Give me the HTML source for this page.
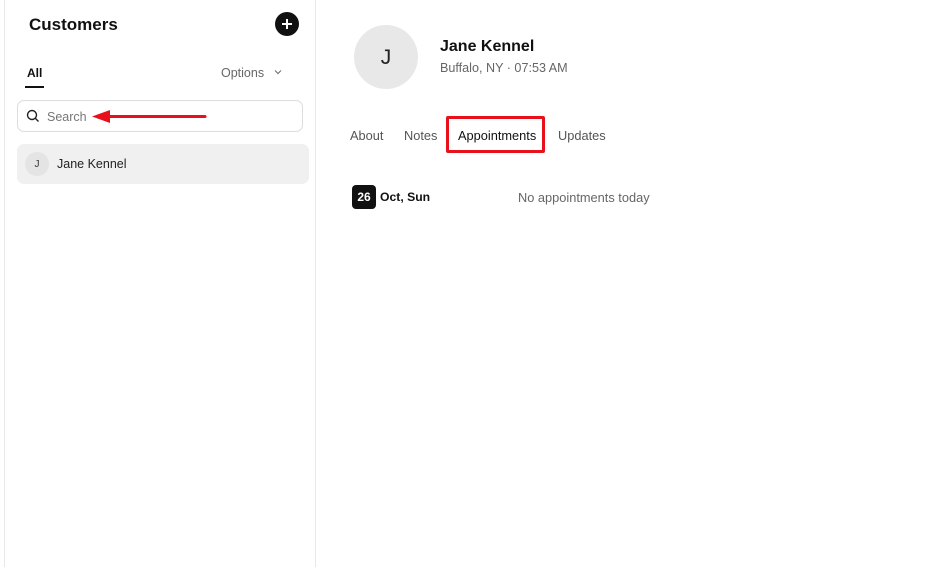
<!DOCTYPE html>
<html><head><meta charset="utf-8"><style>
*{margin:0;padding:0;box-sizing:border-box}
body{width:946px;height:567px;background:#fff;font-family:"Liberation Sans",sans-serif;position:relative;overflow:hidden;color:#111}
.a{position:absolute;white-space:nowrap}
</style></head><body>
<div class="a" style="left:4px;top:0;width:312px;height:567px;border-left:1px solid #e8e8e8;border-right:1px solid #e8e8e8"></div>
<div class="a" style="left:29px;top:15px;font-size:17px;font-weight:bold">Customers</div>
<svg class="a" style="left:275px;top:12px" width="24" height="24"><circle cx="12" cy="12" r="12" fill="#111"/><path d="M12 7V17M7 12H17" stroke="#fff" stroke-width="2"/></svg>
<div class="a" style="left:27px;top:66px;font-size:12px;font-weight:bold">All</div>
<div class="a" style="left:25px;top:86px;width:19px;height:2px;background:#111"></div>
<div class="a" style="left:221px;top:66px;font-size:12.5px;color:#666">Options</div>
<svg class="a" style="left:274px;top:69px" width="8" height="6"><path d="M1 1.5L4 4.5L7 1.5" stroke="#777" fill="none" stroke-width="1.2"/></svg>
<div class="a" style="left:17px;top:100px;width:286px;height:32px;border:1px solid #ddd;border-radius:7px"></div>
<svg class="a" style="left:26px;top:109px" width="14" height="14"><circle cx="6" cy="6" r="4.5" stroke="#222" stroke-width="1.4" fill="none"/><path d="M9.3 9.3L12.5 12.5" stroke="#222" stroke-width="1.4"/></svg>
<div class="a" style="left:47px;top:110px;font-size:12.5px;color:#777">Search</div>
<svg class="a" style="left:90px;top:107px" width="118" height="20"><path d="M14 9.5H115" stroke="#e8101a" stroke-width="3" stroke-linecap="round"/><path d="M2 9.5L20 3V16Z" fill="#e8101a"/></svg>
<div class="a" style="left:17px;top:144px;width:292px;height:40px;background:#f0f0f0;border-radius:7px"></div>
<div class="a" style="left:25px;top:152px;width:24px;height:24px;border-radius:50%;background:#e4e4e4;font-size:10px;text-align:center;line-height:25px;color:#333">J</div>
<div class="a" style="left:57px;top:157px;font-size:12.5px;color:#222">Jane Kennel</div>
<div class="a" style="left:354px;top:25px;width:64px;height:64px;border-radius:50%;background:#e8e8e8;text-align:center;line-height:65px;font-size:21px;color:#222">J</div>
<div class="a" style="left:440px;top:38px;font-size:16px;font-weight:bold">Jane Kennel</div>
<div class="a" style="left:440px;top:61px;font-size:12.6px;color:#666">Buffalo, NY · 07:53 AM</div>
<div class="a" style="left:350px;top:128px;font-size:12.8px;color:#555">About</div>
<div class="a" style="left:404px;top:128px;font-size:12.8px;color:#555">Notes</div>
<div class="a" style="left:458px;top:128px;font-size:12.8px;color:#111">Appointments</div>
<div class="a" style="left:558px;top:128px;font-size:12.8px;color:#555">Updates</div>
<div class="a" style="left:446px;top:116px;width:99px;height:37px;border:3px solid #e8101a;border-radius:2px"></div>
<div class="a" style="left:352px;top:185px;width:24px;height:24px;border-radius:4px;background:#111;color:#fff;font-size:12px;font-weight:bold;text-align:center;line-height:24px">26</div>
<div class="a" style="left:380px;top:190px;font-size:12.2px;font-weight:bold">Oct, Sun</div>
<div class="a" style="left:518px;top:190px;font-size:12.8px;color:#666">No appointments today</div>
</body></html>
